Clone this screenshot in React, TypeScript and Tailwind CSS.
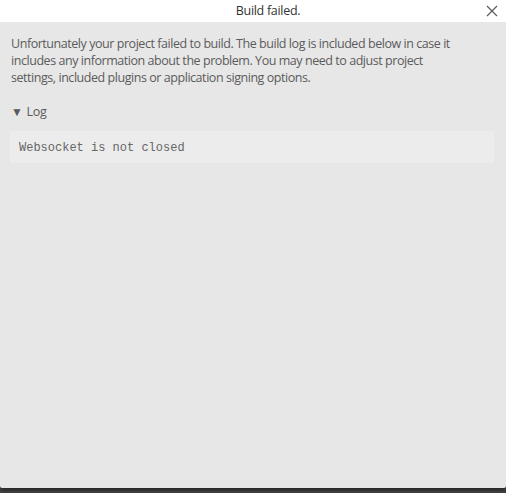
import React from "react";

function App() {
    return (
        <div className="w-[506px] h-[493px] bg-[#444444] font-['Open_Sans','Noto_Sans',sans-serif] overflow-hidden">
            <div className="flex flex-col h-[488px] bg-[#e7e7e7] rounded-b-[2px] shadow-[0_2px_4px_rgba(0,0,0,0.5)]">
                <div className="relative flex items-center justify-center h-[22px] pl-[30px] bg-white">
                    <span className="text-[12.5px] leading-none text-[#333333] tracking-[-0.3px]">Build failed.</span>
                    <button className="absolute right-[8px] top-[4px] w-[13px] h-[13px] flex items-center justify-center">
                        <svg width="12" height="12" viewBox="0 0 12 12">
                            <path d="M1 1 L11 11 M11 1 L1 11" stroke="#5a5a5a" strokeWidth="1.2" fill="none" />
                        </svg>
                    </button>
                </div>
                <div className="flex flex-col px-[10px] pt-[13px]">
                    <p className="w-[448px] pl-[1px] text-[12.5px] leading-[17px] text-[#5b5b5b] tracking-[-0.45px]">
                        Unfortunately your project failed to build. The build log is included below in case it includes any information about the problem. You may need to adjust project settings, included plugins or application signing options.
                    </p>
                    <div className="flex items-center gap-[4px] mt-[17px] pl-[1px] text-[12.5px] leading-[17px] text-[#5b5b5b] tracking-[-0.3px]">
                        <span className="text-[12px]">▼</span>
                        <span>Log</span>
                    </div>
                    <div className="mt-[11px] h-[32px] flex items-center pt-[1px] px-[9px] bg-[#ececec] w-[484px]">
                        <span className="font-['Liberation_Mono',monospace] text-[12px] text-[#666666]">Websocket is not closed</span>
                    </div>
                </div>
            </div>
        </div>
    );
}

export default App;
